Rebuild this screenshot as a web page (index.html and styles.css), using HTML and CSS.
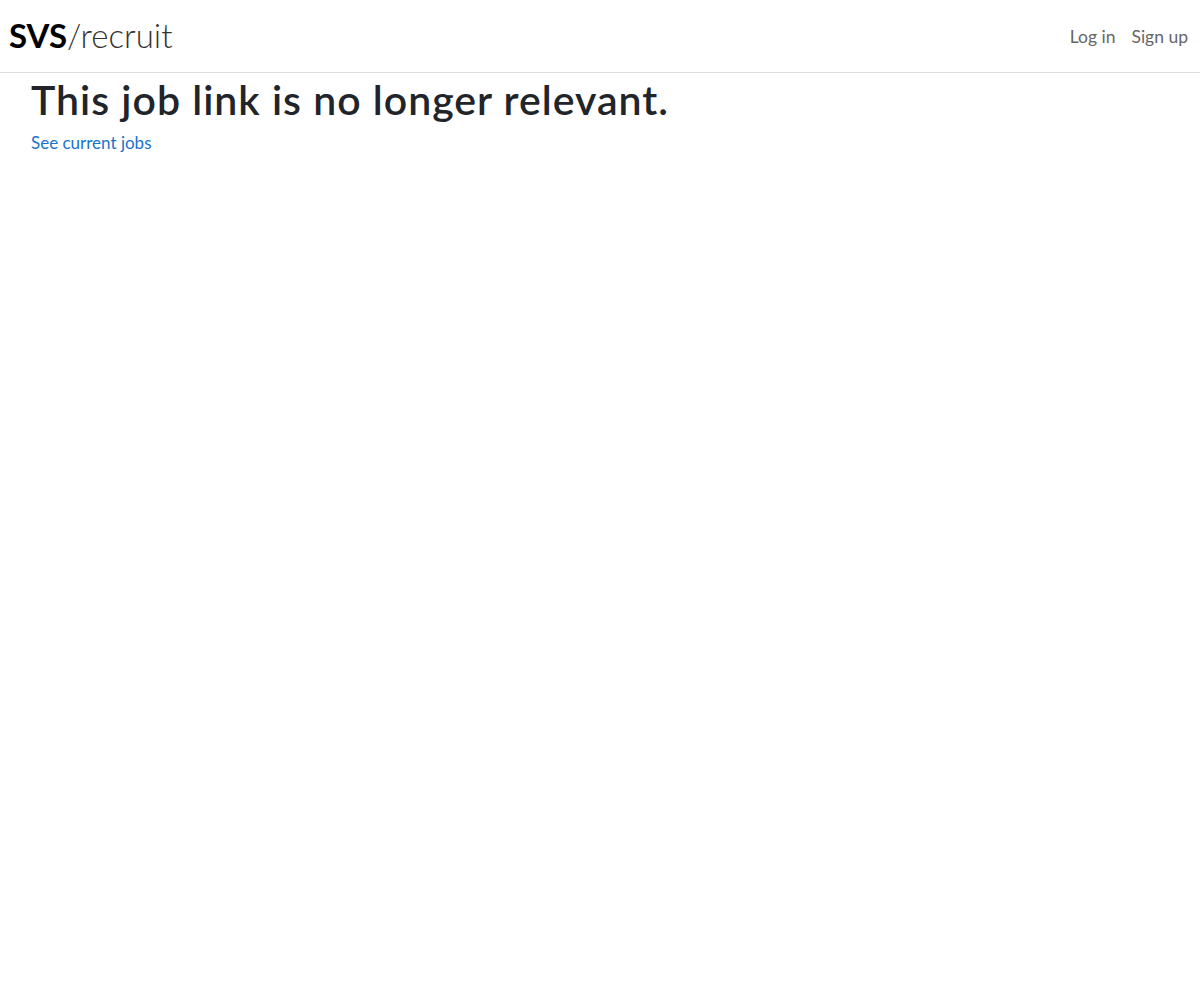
FILE: index.html
```html
<!DOCTYPE html>
<html lang="en">
<head>
    <meta charset="UTF-8">
    <meta name="viewport" content="width=device-width, initial-scale=1.0">
    <title>SVS/recruit</title>
    <link rel="stylesheet" href="styles.css">
</head>
<body>
    <header class="topbar">
        <a class="brand" href="#"><span class="brand-bold">SVS</span><span class="brand-light">/recruit</span></a>
        <nav class="nav">
            <a class="nav-link" href="#">Log in</a>
            <a class="nav-link" href="#">Sign up</a>
        </nav>
    </header>

    <main class="content">
        <h1 class="heading">This job link is no longer relevant.</h1>
        <a class="jobs-link" href="#">See current jobs</a>
    </main>
</body>
</html>
```

FILE: styles.css
```css
body{
    margin: 0;
    background-color: white;
    font-family: Lato, "Open Sans", sans-serif;
    color: #212529;
}
a{
    text-decoration: none;
}
.topbar{
    display: flex;
    flex-direction: row;
    justify-content: space-between;
    align-items: center;
    height: 73px;
    padding: 0 12px 2px 9px;
    border-bottom: 1px solid #dddddd;
    box-sizing: border-box;
}
.brand{
    font-size: 33px;
    color: black;
    line-height: 1;
}
.brand-bold{
    font-weight: 700;
}
.brand-light{
    font-weight: 300;
    color: #333333;
}
.nav{
    display: flex;
    flex-direction: row;
    gap: 16px;
    padding-top: 2px;
}
.nav-link{
    font-size: 17.5px;
    color: #666666;
}
.content{
    padding: 0 31px;
}
.heading{
    font-size: 41px;
    font-weight: 600;
    letter-spacing: 1px;
    margin: 2px 0 8px 0;
    line-height: 1.2;
}
.jobs-link{
    font-size: 17px;
    color: #1a73c8;
}
```
